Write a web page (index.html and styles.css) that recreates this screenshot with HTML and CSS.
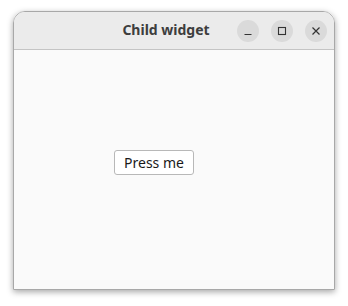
FILE: index.html
```html
<!DOCTYPE html>
<html lang="en">
  <head>
    <meta charset="UTF-8" />
    <title>Child widget</title>
    <link rel="stylesheet" href="styles.css">
  </head>
  <body>
    <div class="window">
      <div class="titlebar">
        <div class="titlebar__title">Child widget</div>
        <div class="titlebar__btns">
          <span class="titlebar__btn">
            <svg width="10" height="10" viewBox="0 0 10 10"><path d="M1.5 8.5h7" stroke="#333" stroke-width="1.2" fill="none"/></svg>
          </span>
          <span class="titlebar__btn">
            <svg width="10" height="10" viewBox="0 0 10 10"><rect x="1.5" y="1.5" width="7" height="7" stroke="#333" stroke-width="1.1" fill="none"/></svg>
          </span>
          <span class="titlebar__btn">
            <svg width="10" height="10" viewBox="0 0 10 10"><path d="M1.5 1.5l7 7M8.5 1.5l-7 7" stroke="#333" stroke-width="1.2" fill="none"/></svg>
          </span>
        </div>
      </div>
      <div class="content">
        <button class="push-btn">Press me</button>
      </div>
    </div>
  </body>
</html>
```

FILE: styles.css
```css
html,
body {
  margin: 0;
  height: 100%;
  background-color: #ffffff;
  font-family: "Noto Sans", "Open Sans", sans-serif;
}
body {
  padding: 11px 0 0 13px;
  box-sizing: border-box;
}
.window {
  width: 322px;
  height: 279px;
  display: flex;
  flex-direction: column;
  border: 1px solid #a8a8a8;
  border-radius: 12px 12px 0 0;
  box-sizing: border-box;
  overflow: hidden;
  box-shadow: 0 2px 6px rgba(0, 0, 0, 0.35);
}
.titlebar {
  height: 37px;
  flex: 0 0 37px;
  display: flex;
  align-items: center;
  justify-content: flex-end;
  background-color: #ebebeb;
  border-bottom: 1px solid #c4c4c4;
  position: relative;
}
.titlebar__title {
  position: absolute;
  left: 0;
  right: 0;
  top: 8px;
  text-align: center;
  font-size: 14px;
  font-weight: 700;
  color: #3d3d3d;
  padding-right: 16px;
}
.titlebar__btns {
  display: flex;
  gap: 12px;
  margin-right: 7px;
  position: relative;
}
.titlebar__btn {
  width: 22px;
  height: 22px;
  border-radius: 50%;
  background-color: #dadada;
  display: flex;
  align-items: center;
  justify-content: center;
}
.content {
  flex: 1 1 auto;
  background-color: #fafafa;
  padding: 100px 0 0 100px;
}
.push-btn {
  width: 80px;
  height: 25px;
  padding: 0;
  border: 1px solid #b8b8b8;
  border-radius: 3px;
  background-color: #ffffff;
  font-family: "Noto Sans", "Open Sans", sans-serif;
  font-size: 14px;
  color: #1a1a1a;
}
```
